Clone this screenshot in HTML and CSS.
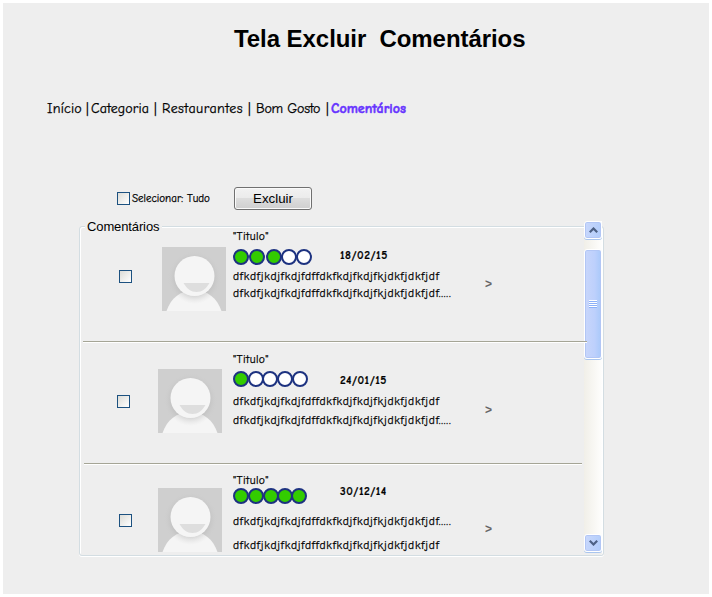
FILE: index.html
```html
<!DOCTYPE html>
<html lang="pt-BR">
<head>
<meta charset="utf-8">
<title>Tela Excluir Comentários</title>
<link rel="stylesheet" href="styles.css">
</head>
<body>
<svg width="0" height="0" class="defs" aria-hidden="true">
  <defs>
    <radialGradient id="shade" cx=".5" cy=".5" r=".5"><stop offset=".7" stop-color="#a8a8a8"/><stop offset="1" stop-color="#cfcfcf" stop-opacity="0"/></radialGradient>
    <clipPath id="shoulders"><path d="M4.500 64C9 51 18 43.500 32 43.500S55 51 59.500 64Z"/></clipPath>
    <symbol id="avatar" viewBox="0 0 64 64">
      <rect width="64" height="64" fill="#cfcfcf"/>
      <circle cx="32.500" cy="31" r="27" fill="url(#shade)" opacity=".3"/>
      <path d="M4.500 64C9 51 18 43.500 32 43.500S55 51 59.500 64Z" fill="#f5f5f5"/>
      <circle cx="32.500" cy="32" r="25" fill="url(#shade)" opacity=".35" clip-path="url(#shoulders)"/>
      <circle cx="32.500" cy="29" r="20" fill="#f5f5f5"/>
      <path d="M21.500 36H47.500C44 42 40 45 34.500 45S25 42 21.500 36Z" fill="#dedede"/>
    </symbol>
  </defs>
</svg>
<main class="page">
  <h1>Tela Excluir&nbsp; Comentários</h1>
  <nav class="crumbs">
    <a class="c-home">Início</a><i>|</i><a class="c-cat">Categoria</a><i class="wide">|</i><a class="c-rest">Restaurantes</a><i class="wide">|</i><a class="c-name">Bom Gosto</a><i class="last">|</i><b>Comentários</b>
  </nav>
  <div class="toolbar">
    <span class="check"></span><span class="select-label">Selecionar: Tudo</span><button>Excluir</button>
  </div>
  <section class="panel">
    <div class="list">
      <h2><span>Comentários</span></h2>
      <article class="row first">
        <span class="check"></span>
        <svg class="avatar"><use href="#avatar"/></svg>
        <div class="body">
          <p class="title">"Titulo"</p>
          <svg class="dots" width="80" height="16"><g class="on"><circle cx="8" cy="8" r="7"/><circle cx="24" cy="8" r="7"/><circle cx="41" cy="8" r="7"/></g><circle cx="56" cy="8" r="7"/><circle cx="71" cy="8" r="7"/></svg>
          <p class="line one">dfkdfjkdjfkdjfdffdkfkdjfkdjfkjdkfjdkfjdf</p>
          <p class="line two">dfkdfjkdjfkdjfdffdkfkdjfkdjfkjdkfjdkfjdf<span class="more">.....</span></p>
        </div>
        <time>18/02/15</time>
        <span class="go">&gt;</span>
      </article>
      <hr class="rule-a">
      <article class="row second">
        <span class="check"></span>
        <svg class="avatar"><use href="#avatar"/></svg>
        <div class="body">
          <p class="title">"Titulo"</p>
          <svg class="dots" width="80" height="16"><g class="on"><circle cx="8" cy="8" r="7"/></g><circle cx="23" cy="8" r="7"/><circle cx="37" cy="8" r="7"/><circle cx="52" cy="8" r="7"/><circle cx="67" cy="8" r="7"/></svg>
          <p class="line one">dfkdfjkdjfkdjfdffdkfkdjfkdjfkjdkfjdkfjdf</p>
          <p class="line two">dfkdfjkdjfkdjfdffdkfkdjfkdjfkjdkfjdkfjdf<span class="more">.....</span></p>
        </div>
        <time>24/01/15</time>
        <span class="go">&gt;</span>
      </article>
      <hr class="rule-b">
      <article class="row third">
        <span class="check"></span>
        <svg class="avatar"><use href="#avatar"/></svg>
        <div class="body">
          <p class="title">"Titulo"</p>
          <svg class="dots" width="80" height="16"><g class="on"><circle cx="8" cy="8" r="7"/><circle cx="23" cy="8" r="7"/><circle cx="38" cy="8" r="7"/><circle cx="52" cy="8" r="7"/><circle cx="66" cy="8" r="7"/></g></svg>
          <p class="line one">dfkdfjkdjfkdjfdffdkfkdjfkdjfkjdkfjdkfjdf<span class="more">.....</span></p>
          <p class="line two">dfkdfjkdjfkdjfdffdkfkdjfkdjfkjdkfjdkfjdf</p>
        </div>
        <time>30/12/14</time>
        <span class="go">&gt;</span>
      </article>
    </div>
    <div class="scrollbar">
      <span class="arrow"><svg width="9" height="6"><path d="M.8 5.200L4.500 1.500L8.200 5.200"/></svg></span>
      <span class="thumb"><span class="grip"></span></span>
      <span class="arrow down"><svg width="9" height="6"><path d="M.8.8L4.500 4.500L8.200.8"/></svg></span>
    </div>
  </section>
</main>
</body>
</html>
```

FILE: styles.css
```css
* { box-sizing: border-box; }
body { margin: 0; padding: 3px; background: #fff; color: #000; font-family: "Comic Sans MS", "Comic Neue", Lato, sans-serif; }
.defs { display: block; height: 0; }
.page { width: 706px; height: 591px; background: #eee; overflow: hidden; }
h1 { margin: 21px 0 0 231px; font: bold 24px/30px "Liberation Sans", Arial, sans-serif; letter-spacing: -.06px; white-space: nowrap; }
.crumbs { display: flex; margin: 45px 0 0 44px; height: 20px; font-size: 14px; line-height: 20px; white-space: nowrap; -webkit-text-stroke: .25px; }
.crumbs i { width: 5px; font-style: normal; }
.crumbs i.wide { width: 8px; }
.crumbs b { color: #6633ff; font-weight: 900; -webkit-text-stroke: .5px; }
.c-home { width: 39px; letter-spacing: .2px; }
.c-cat { width: 63px; letter-spacing: .1px; }
.c-rest { width: 86px; letter-spacing: .45px; }
.c-name { width: 70px; letter-spacing: -.25px; }

.toolbar { display: flex; align-items: flex-start; height: 25px; margin: 65px 0 0 114px; }
.check { display: block; flex: none; width: 13px; height: 13px; border: 1px solid #1c5180; background: linear-gradient(135deg, #dcdcd7, #fff); }
.toolbar .check { margin-top: 8px; }
.select-label { width: 102px; margin: 7px 0 0 2px; font-size: 11px; line-height: 16px; white-space: nowrap; -webkit-text-stroke: .25px; }
button { width: 78px; height: 23px; margin-top: 3px; padding: 0; border: 1px solid #707070; border-radius: 3px; box-shadow: inset 0 0 0 1px #fafafa; background: linear-gradient(#f2f2f2, #ebebeb 48%, #dddddd 50%, #cfcfcf); font: 13.3px "Liberation Sans", Arial, sans-serif; color: #000; }

.panel { display: flex; width: 525px; height: 330px; margin: 17px 0 0 76px; border: 1px solid #d3dde2; border-radius: 3px; box-shadow: inset 1px 1px #fff, inset -1px 0 #fff, 0 1px #fff; }
.list { width: 507px; margin-right: -3px; z-index: 1; }
h2 { display: flex; align-items: flex-start; height: 1px; margin: 0 0 0 5px; font: 13px/16px "Liberation Sans", Arial, sans-serif; letter-spacing: -.12px; }
h2 span { flex: none; width: 77px; margin-top: -8px; padding-left: 2px; background: #eee; }
.row { display: flex; align-items: flex-start; padding-left: 37px; }
.first { height: 113px; }
.second { height: 120px; }
.avatar { width: 64px; height: 64px; flex: none; }
.body { width: 107px; white-space: nowrap; }
p { margin: 0; height: 16px; font-size: 11.5px; line-height: 16px; letter-spacing: .4px; -webkit-text-stroke: .25px; }
.line { letter-spacing: .78px; }
.dots { display: block; fill: #fff; stroke: #1d3280; stroke-width: 2; }
.dots .on { fill: #3c0; }
time { width: 145px; font-size: 11.5px; line-height: 16px; font-weight: 900; letter-spacing: .55px; -webkit-text-stroke: .2px; }
.go { font: bold 12px/16px "Liberation Sans", Arial, sans-serif; color: #666; }
hr { height: 2px; margin: 0; border: 0; border-top: 1px solid #a5a596; background: #fff; }
.rule-a { margin-left: 3px; width: 504px; }
.rule-b { margin-left: 4px; width: 498px; }

.first .check { margin: 42px 0 0 2px; }
.first .avatar { margin: 19px 7px 0 30px; }
.first .title { margin-top: 1px; }
.first .dots { margin-top: 4px; }
.first .one { margin-top: 4px; }
.first .two { margin-top: 1px; }
.first time { margin-top: 20px; }
.first .go { margin-top: 48px; }

.second .check { margin-top: 52px; }
.second .avatar { margin: 26px 11px 0 28px; }
.second .title { margin-top: 9px; }
.second .dots { margin-top: 3px; }
.second .one { margin-top: 7px; }
.second .two { margin-top: 3px; }
.second time { margin-top: 30px; }
.second .go { margin-top: 59px; }

.third .check { margin: 49px 0 0 2px; }
.third .avatar { margin: 23px 11px 0 26px; }
.third .title { margin-top: 8px; }
.third .dots { margin-top: -1px; }
.third .one { margin-top: 10px; }
.third .two { margin-top: 8px; }
.third time { margin-top: 19px; }
.third .go { margin-top: 56px; }

.scrollbar { display: flex; flex-direction: column; width: 18px; height: 331px; margin-top: -6px; flex: none; background: linear-gradient(90deg, #f1efe8, #fefefd); }
.arrow, .thumb { display: grid; place-items: center; width: 18px; border: 1px solid #fff; border-radius: 3px; box-shadow: inset 0 0 0 1px #b2c6f5, 0 1px #a9c5ee; background: linear-gradient(100deg, #cad8fc, #b0ccfb); }
.arrow { height: 18px; }
.arrow svg { fill: none; stroke: #4d6185; stroke-width: 2.2; }
.thumb { height: 110px; margin-top: 10px; background: linear-gradient(90deg, #c8d6fb, #bdd0fc 60%, #a9c9fa); }
.grip { width: 8px; height: 8px; background: repeating-linear-gradient(#fff 0 1px, #8cb0f8 1px 2px); }
.down { margin-top: auto; }
```
